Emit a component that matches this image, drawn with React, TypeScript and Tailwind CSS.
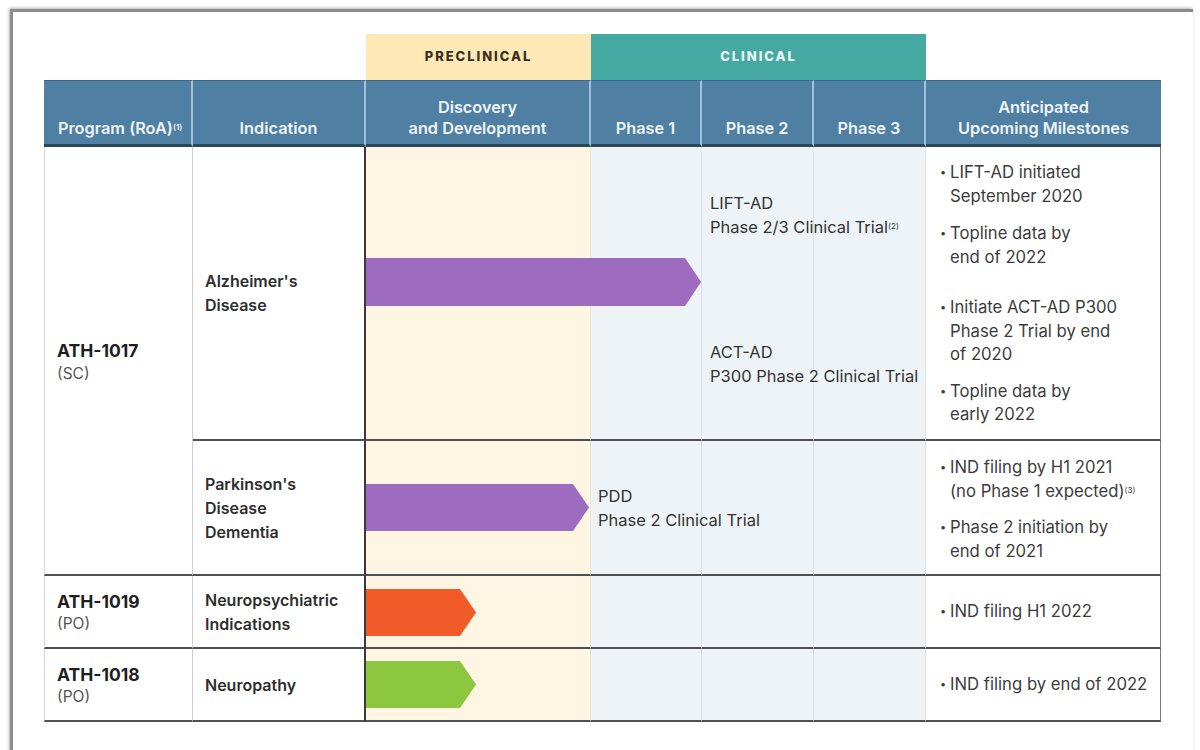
import React from "react";

const F = { fontFamily: "Inter, 'Open Sans', sans-serif" };

function Arrow({ color, width, height = 47 }: { color: string; width: number; height?: number }) {
  return (
    <div
      className="[clip-path:polygon(0_0,calc(100%-16px)_0,100%_50%,calc(100%-16px)_100%,0_100%)]"
      style={{ background: color, width, height }}
    />
  );
}

function Bullet({ children, className = "" }: { children: React.ReactNode; className?: string }) {
  return (
    <div className={`flex ${className}`}>
      <span className="w-[10px] shrink-0 text-[11px]">•</span>
      <span>{children}</span>
    </div>
  );
}

function PhaseCells({ row }: { row: string }) {
  const rowB = "border-b-2 border-b-[#505050]";
  const disc = "bg-[#fef5e2] border-r border-r-[#ece6d8]";
  const ph = "bg-[#edf3f6] border-r border-r-[#d9e2e8]";
  return (
    <>
      <div className={`${row} col-start-3 ${disc} ${rowB}`} />
      <div className={`${row} col-start-4 ${ph} ${rowB}`} />
      <div className={`${row} col-start-5 ${ph} ${rowB}`} />
      <div className={`${row} col-start-6 ${ph} ${rowB}`} />
    </>
  );
}

export default function App() {
  const hdr = "row-start-2 bg-[#4f80a4] border-t border-t-[#3c6886] border-b-[3px] border-b-[#2c465a] text-[#eef3f7] font-semibold text-[16.3px] leading-[21px] flex items-end justify-center text-center pb-[5px]";
  const hsep = "border-r-2 border-r-[#9cc1d8]";
  const rowB = "border-b-2 border-b-[#505050]";
  const ind = "col-start-2 bg-white border-r-2 border-r-[#3a3a3a] flex items-center pl-[12px] font-semibold text-[16px] leading-[24px] text-[#2e2e2e]";
  const ms = "col-start-7 bg-white border-r border-r-[#7a7a7a] text-[16.7px] leading-[23.5px] text-[#3c3c3c] pl-[14px]";
  const prog = "col-start-1 bg-white border-l border-l-[#d8d8d8] border-r border-r-[#cfcfcf] flex flex-col justify-center pl-[12px]";
  const body = "text-[16.5px] leading-[24px] text-[#333] whitespace-nowrap";

  return (
    <div className="w-[1200px] h-[750px] bg-white overflow-hidden pt-[9px] pl-[10px]" style={F}>
      <div className="w-[1183px] h-[760px] border-t-[3px] border-l-[3px] border-[#8c8c8c] shadow-[-1px_-1px_3px_rgba(0,0,0,0.3)] pt-[22px] pl-[31px]">
        <div className="grid grid-cols-[149px_173px_225px_111px_112px_112px_235px] grid-rows-[46px_67px_294px_135px_73px_73px]">
          {/* band */}
          <div className="row-start-1 col-start-3 bg-[#fde8b6] flex items-center justify-center text-[13px] font-extrabold tracking-[0.15em] text-[#3a2f1c]">PRECLINICAL</div>
          <div className="row-start-1 col-start-4 col-span-3 bg-[#45a9a1] flex items-center justify-center text-[13px] font-extrabold tracking-[0.15em] text-[#eafaf7]">CLINICAL</div>

          {/* header */}
          <div className={`${hdr} col-start-1 ${hsep} justify-start pl-[14px]`}>
            <span>Program (RoA)<sup className="text-[8px]">(1)</sup></span>
          </div>
          <div className={`${hdr} col-start-2 ${hsep}`}>Indication</div>
          <div className={`${hdr} col-start-3 ${hsep}`}>Discovery<br />and Development</div>
          <div className={`${hdr} col-start-4 ${hsep}`}>Phase 1</div>
          <div className={`${hdr} col-start-5 ${hsep}`}>Phase 2</div>
          <div className={`${hdr} col-start-6 ${hsep}`}>Phase 3</div>
          <div className={`${hdr} col-start-7`}>Anticipated<br />Upcoming Milestones</div>

          {/* ATH-1017 */}
          <div className={`row-start-3 row-span-2 ${prog} ${rowB} pt-[2px]`}>
            <div className="text-[17.5px] font-bold leading-[24px] text-[#1f1f1f]">ATH-1017</div>
            <div className="text-[15.5px] leading-[22px] text-[#555]">(SC)</div>
          </div>

          {/* Row Alzheimer's */}
          <div className={`row-start-3 ${ind} ${rowB}`}>Alzheimer's<br />Disease</div>
          <PhaseCells row="row-start-3" />
          <div className={`row-start-3 ${ms} ${rowB} pt-[14px]`}>
            <Bullet>LIFT-AD initiated<br />September 2020</Bullet>
            <Bullet className="mt-[14px]">Topline data by<br />end of 2022</Bullet>
            <Bullet className="mt-[27px]">Initiate ACT-AD P300<br />Phase 2 Trial by end<br />of 2020</Bullet>
            <Bullet className="mt-[13px]">Topline data by<br />early 2022</Bullet>
          </div>
          <div className="row-start-3 col-start-3 col-span-2 self-start mt-[111px]">
            <Arrow color="#9d6cc0" width={335} height={48} />
          </div>
          <div className={`row-start-3 col-start-5 col-span-2 pl-[8px] pt-[44px] ${body}`}>
            <div>LIFT-AD</div>
            <div>Phase 2/3 Clinical Trial<sup className="text-[8px]">(2)</sup></div>
            <div className="mt-[101px]">ACT-AD</div>
            <div>P300 Phase 2 Clinical Trial</div>
          </div>

          {/* Row PDD */}
          <div className={`row-start-4 ${ind} ${rowB}`}>Parkinson's<br />Disease<br />Dementia</div>
          <PhaseCells row="row-start-4" />
          <div className={`row-start-4 ${ms} ${rowB} pt-[15px]`}>
            <Bullet>IND filing by H1 2021<br />(no Phase 1 expected)<sup className="text-[8px]">(3)</sup></Bullet>
            <Bullet className="mt-[13px]">Phase 2 initiation by<br />end of 2021</Bullet>
          </div>
          <div className="row-start-4 col-start-3 col-span-2 self-start mt-[43px]">
            <Arrow color="#9d6cc0" width={223} />
          </div>
          <div className={`row-start-4 col-start-4 col-span-3 flex flex-col justify-center pl-[7px] pb-[2px] ${body} leading-[23px]`}>
            <div>PDD</div>
            <div>Phase 2 Clinical Trial</div>
          </div>

          {/* ATH-1019 */}
          <div className={`row-start-5 ${prog} ${rowB}`}>
            <div className="text-[17.5px] font-bold leading-[23px] text-[#1f1f1f]">ATH-1019</div>
            <div className="text-[15.5px] leading-[21px] text-[#555]">(PO)</div>
          </div>
          <div className={`row-start-5 ${ind} ${rowB}`}>Neuropsychiatric<br />Indications</div>
          <PhaseCells row="row-start-5" />
          <div className={`row-start-5 ${ms} ${rowB} flex items-center`}>
            <Bullet>IND filing H1 2022</Bullet>
          </div>
          <div className="row-start-5 col-start-3 self-start mt-[13px]">
            <Arrow color="#f15a29" width={110} />
          </div>

          {/* ATH-1018 */}
          <div className={`row-start-6 ${prog} ${rowB}`}>
            <div className="text-[17.5px] font-bold leading-[23px] text-[#1f1f1f]">ATH-1018</div>
            <div className="text-[15.5px] leading-[21px] text-[#555]">(PO)</div>
          </div>
          <div className={`row-start-6 ${ind} ${rowB}`}>Neuropathy</div>
          <PhaseCells row="row-start-6" />
          <div className={`row-start-6 ${ms} ${rowB} flex items-center`}>
            <Bullet>IND filing by end of 2022</Bullet>
          </div>
          <div className="row-start-6 col-start-3 self-start mt-[12px]">
            <Arrow color="#8dc63f" width={110} />
          </div>
        </div>
      </div>
    </div>
  );
}
